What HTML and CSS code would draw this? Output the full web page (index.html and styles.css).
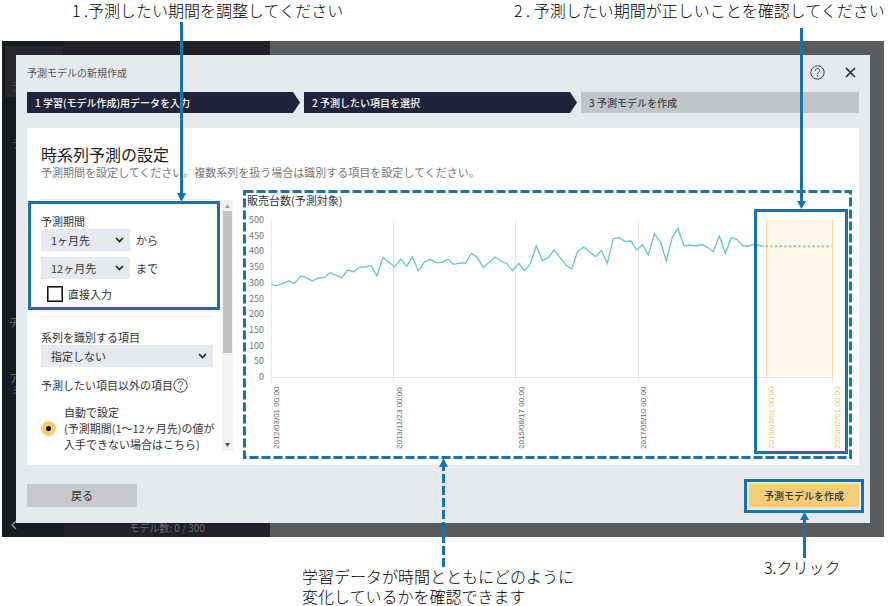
FILE: index.html
```html
<!DOCTYPE html>
<html lang="ja">
<head>
<meta charset="utf-8">
<meta name="viewport" content="width=device-width, initial-scale=1">
<title>予測モデルの新規作成</title>
<link rel="stylesheet" href="styles.css">
</head>
<body>
<div class="captions-top">
  <p>1 .予測したい期間を調整してください</p>
  <p>2 . 予測したい期間が正しいことを確認してください</p>
</div>

<div class="screen">
  <div class="backdrop">
    <div class="nav">
      <div class="nav-tile">デ</div>
      <span class="nav-item">デ</span>
      <span class="nav-item lower">チ</span>
      <span class="nav-item wrapped">ア<br>&nbsp;ミ</span>
      <span class="nav-collapse">
        <svg width="6" height="10" viewBox="0 0 6 10"><path d="M5 1 1 5l4 4"/></svg>
      </span>
    </div>
    <div class="model-list">モデル数: 0 / 300</div>
    <div class="workspace"></div>
  </div>

  <main class="dialog">
    <header class="dialog-head">
      <h1>予測モデルの新規作成</h1>
      <button class="icon-button" type="button" aria-label="ヘルプ">
        <svg class="help" width="15" height="15" viewBox="0 0 15 15"><circle cx="7.500" cy="7.500" r="6.700"/><path d="M5.300 5.800C5.300 4.300 6.300 3.600 7.500 3.600s2.200.7 2.200 1.900c0 1.600-2.200 1.700-2.200 3.300M7.500 10.200v1.400"/></svg>
      </button>
      <button class="icon-button" type="button" aria-label="閉じる">
        <svg class="close" width="11" height="11" viewBox="0 0 11 11"><path d="M1 1l9 9M10 1l-9 9"/></svg>
      </button>
    </header>

    <ol class="steps">
      <li class="step done">1 学習(モデル作成)用データを入力</li>
      <li class="step done">2 予測したい項目を選択</li>
      <li class="step">3 予測モデルを作成</li>
    </ol>

    <section class="panel">
      <h2>時系列予測の設定</h2>
      <p class="lead">予測期間を設定してください。複数系列を扱う場合は識別する項目を設定してください。</p>

      <div class="content">
        <form class="settings" id="settings">
          <div class="group period">
            <div class="label">予測期間</div>
            <div class="range">
              <span class="select short"><select id="from"><option>1ヶ月先</option></select>
                <svg width="9" height="6" viewBox="0 0 9 6"><path d="M1 1l3.500 3.500L8 1"/></svg></span>
              <label for="from">から</label>
            </div>
            <div class="range">
              <span class="select short"><select id="to"><option>12ヶ月先</option></select>
                <svg width="9" height="6" viewBox="0 0 9 6"><path d="M1 1l3.500 3.500L8 1"/></svg></span>
              <label for="to">まで</label>
            </div>
            <label class="check"><input type="checkbox">直接入力</label>
            <div class="mark period-mark"></div>
            <svg class="arrow period-arrow" width="9" height="180" viewBox="0 0 9 180"><path class="line" d="M4.500 0v174"/><path class="head" d="M0 171h9l-4.500 9z"/></svg>
          </div>
          <div class="group">
            <label class="label" for="series">系列を識別する項目</label>
            <span class="select"><select id="series"><option>指定しない</option></select>
              <svg width="9" height="6" viewBox="0 0 9 6"><path d="M1 1l3.500 3.500L8 1"/></svg></span>
            <div class="label others">予測したい項目以外の項目<svg class="help" width="15" height="15" viewBox="0 0 15 15"><circle cx="7.500" cy="7.500" r="6.700"/><path d="M5.300 5.800C5.300 4.300 6.300 3.600 7.500 3.600s2.200.7 2.200 1.900c0 1.600-2.200 1.700-2.200 3.300M7.500 10.200v1.400"/></svg></div>
            <label class="radio"><input type="radio" name="other" checked><span>自動で設定<br>(予測期間(1～12ヶ月先)の値が<br>入手できない場合はこちら)</span></label>
          </div>
        </form>

        <div class="scrollbar">
          <svg width="5" height="4" viewBox="0 0 5 4"><path class="up" d="M0 4h5L2.500 0z"/></svg>
          <div class="thumb"></div>
          <svg width="5" height="4" viewBox="0 0 5 4"><path class="down" d="M0 0h5L2.500 4z"/></svg>
        </div>

        <svg class="chart" viewBox="0 0 608 268" role="img" aria-label="販売台数(予測対象)">
          <text class="chart-title" x="3" y="15">販売台数(予測対象)</text>
          <g class="y-labels">
            <text x="20" y="33">500</text><text x="20" y="49">450</text><text x="20" y="64">400</text>
            <text x="20" y="80">350</text><text x="20" y="96">300</text><text x="20" y="112">250</text>
            <text x="20" y="127">200</text><text x="20" y="143">150</text><text x="20" y="159">100</text>
            <text x="20" y="174">50</text><text x="20" y="190">0</text>
          </g>
          <path class="grid" d="M27.500 30v163M149.500 30v161M271.500 30v161M394.500 30v161M588.500 187v6M27 187.500h561"/>
          <rect class="forecast" x="522" y="30" width="66" height="157"/>
          <path class="forecast-edge" d="M522.500 30v157.500M588.500 30v157.500"/>
          <g transform="translate(-4 0) scale(.33333)">
            <polyline class="series" points="94,283 110,287 128,281 146,272 164,280 182,258 199,263 217,273 235,264 253,263 270,248 288,256 305,263 323,240 341,245 358,232 376,231 393,227 411,258 429,202 447,217 464,231 482,207 500,229 517,201 535,242 553,216 570,208 588,218 606,217 624,207 641,223 659,219 677,219 694,190 712,202 730,233 747,217 765,201 783,213 800,221 818,242 836,220 853,242 871,221 889,168 907,212 925,203 942,180 960,202 978,226 995,237 1013,184 1031,171 1049,186 1067,200 1084,181 1102,220 1120,146 1138,143 1155,155 1173,153 1190,180 1208,164 1225,195 1243,132 1261,153 1279,213 1297,141 1314,115 1332,168 1350,165 1368,168 1385,163 1403,172 1420,185 1438,138 1456,190 1474,143 1491,149 1509,168 1527,168 1545,162 1563,168 1571,168"/>
            <path class="series predicted" d="M1577 169h198"/>
          </g>
          <g class="x-labels">
            <text transform="translate(35 259) rotate(-90)">2012/03/01 00:00</text>
            <text transform="translate(158 259) rotate(-90)">2013/11/23 00:00</text>
            <text transform="translate(280 259) rotate(-90)">2015/08/17 00:00</text>
            <text transform="translate(402 259) rotate(-90)">2017/05/10 00:00</text>
            <text class="future" transform="translate(530 259) rotate(-90)">2019/03/01 00:00</text>
            <text class="future" transform="translate(596 259) rotate(-90)">2020/02/01 00:00</text>
          </g>
          <g class="arrow">
            <rect class="line dashed" x=".5" y="1.500" width="606" height="266"/>
            <rect class="line" x="511.500" y="20.500" width="91" height="242"/>
            <path class="line" d="M557.500-162V13"/>
            <path class="head" d="M553 11h9l-4.500 8z"/>
            <path class="line dashed" d="M199.500 377V276"/>
            <path class="head" d="M195 277h9l-4.500-9z"/>
          </g>
        </svg>
      </div>
    </section>

    <footer class="actions">
      <button class="button" type="button">戻る</button>
      <div class="submit">
        <button class="button primary" type="submit" form="settings">予測モデルを作成</button>
        <div class="mark submit-mark"></div>
        <svg class="arrow submit-arrow" width="9" height="46" viewBox="0 0 9 46"><path class="line" d="M4.500 46V6"/><path class="head" d="M0 8h9L4.500 0z"/></svg>
      </div>
    </footer>
  </main>
</div>

<div class="captions-bottom">
  <p>学習データが時間とともにどのように<br>変化しているかを確認できます</p>
  <p class="click">3.クリック</p>
</div>
</body>
</html>
```

FILE: styles.css
```css
* { box-sizing: border-box; }

body {
  margin: 0;
  background: #fff;
  color: #333;
  font: 11px/15px "Noto Sans CJK JP", sans-serif;
}

h1, h2, p, ol { margin: 0; padding: 0; font-weight: 400; }
button, select, input { margin: 0; font: inherit; color: inherit; }

.captions-top,
.captions-bottom {
  display: grid;
  color: #000;
  font-size: 16px;
  line-height: 20px;
  white-space: nowrap;
}
.captions-top p,
.captions-bottom p { font-weight: 300; }
.captions-top {
  grid-template-columns: 442fr 374fr;
  height: 41px;
  padding-left: 72px;
}
.captions-bottom {
  grid-template-columns: 462fr 124fr;
  padding: 29px 0 0 302px;
}
.click { margin-top: -9px; }

.screen {
  display: grid;
  margin: 0 4px 0 2px;
}
.screen > * { grid-area: 1 / 1; }

.backdrop {
  display: grid;
  grid-template-columns: 62px 206px 1fr;
  background: #5a5b5c;
  color: #6c6c70;
}
.nav {
  display: flex;
  flex-direction: column;
  gap: 39px;
  padding: 5px 1px 7px 3px;
  background: #181b24;
}
.nav-tile {
  display: flex;
  align-items: flex-end;
  height: 51px;
  padding: 0 0 3px 7px;
  background: #282730;
  color: #505058;
}
.nav-item { padding-left: 7px; color: #505058; }
.nav-item.lower { margin-top: 125px; padding-left: 4px; color: #6c6c70; }
.nav-item.wrapped { margin-top: 3px; padding-left: 4px; line-height: 12px; color: #6c6c70; }
.nav-collapse { display: flex; margin-top: auto; padding-left: 6px; }
.nav-collapse svg { fill: none; stroke: #8c8c90; stroke-width: 1.5; }
.model-list {
  display: flex;
  align-items: flex-end;
  justify-content: center;
  padding-bottom: 2px;
  background: #22212a;
  font-size: 10px;
}

.dialog {
  position: relative;
  margin: 14px;
  padding: 0 11px 16px;
  background: #e6e9ee;
}
.dialog-head {
  display: flex;
  align-items: center;
  gap: 20px;
  height: 37px;
  padding: 0 3px 3px 0;
}
.dialog-head h1 { flex: 1; font-size: 10px; color: #555; }
.icon-button { display: flex; padding: 0; border: 0; background: none; }
.help { fill: none; stroke: #444; stroke-width: 1; }
.close { fill: none; stroke: #222; stroke-width: 1.5; }

.steps {
  display: grid;
  grid-template-columns: 273fr 273fr 278fr;
  gap: 4px;
  list-style: none;
}
.step {
  height: 21px;
  padding-left: 8px;
  background: #c1c5ca;
  color: #444;
  font-size: 10px;
  line-height: 22px;
  font-weight: 500;
}
.step.done {
  background: #20233a;
  color: #fff;
  clip-path: polygon(0 0, calc(100% - 7px) 0, 100% 50%, calc(100% - 7px) 100%, 0 100%);
}

.panel {
  margin-top: 15px;
  padding: 17px 7px 7px 14px;
  background: #fff;
}
.panel h2 { font-size: 16px; line-height: 18px; color: #222; }
.lead { line-height: 18px; color: #777; }
.content {
  display: grid;
  grid-template-columns: 181px 22px 1fr;
  margin-top: 9px;
}

.settings { margin: 9px 9px 0 0; }
.group { position: relative; padding-top: 13px; }
.period {
  padding: 14px 0 13px;
  border: solid #e6e6e6;
  border-width: 1px 0;
}
.label { display: flex; align-items: center; height: 15px; white-space: nowrap; }
.others { margin: 11px 0; }
.range { display: flex; align-items: center; gap: 6px; margin-bottom: 6px; }
.select { position: relative; display: block; height: 22px; }
.select.short { width: 89px; }
.select select {
  appearance: none;
  width: 100%;
  height: 22px;
  padding: 0 10px;
  border: 0;
  border-radius: 0;
  background: #e6e9ee;
}
.select svg {
  position: absolute;
  top: 8px;
  right: 6px;
  fill: none;
  stroke: #222;
  stroke-width: 1.7;
  pointer-events: none;
}
.check { display: flex; align-items: center; gap: 5px; height: 18px; padding-left: 6px; }
.check input {
  appearance: none;
  width: 16px;
  height: 16px;
  border: 1px solid #111;
  outline: 1px solid #777;
  outline-offset: -2px;
  background: #fff;
}
.radio { display: flex; align-items: center; gap: 8px; line-height: 16px; white-space: nowrap; }
.radio input {
  appearance: none;
  flex: none;
  width: 15px;
  height: 15px;
  border: 5px solid #f4cd78;
  border-radius: 50%;
  background: #000;
}

.scrollbar {
  display: flex;
  flex-direction: column;
  align-items: center;
  width: 11px;
  height: 251px;
  margin-top: 10px;
  padding: 4px 1px;
  background: #f1f1f1;
}
.scrollbar .up { fill: #a3a3a3; }
.scrollbar .down { fill: #505050; }
.thumb { width: 100%; height: 142px; margin: 3px 0 auto; background: #c1c1c1; }

.chart { display: block; width: 100%; overflow: visible; }
.chart-title { font-size: 11px; fill: #333; }
.y-labels { font-size: 9px; text-anchor: end; fill: #777; }
.x-labels { font-family: "Liberation Sans", sans-serif; font-size: 8px; fill: #666; }
.x-labels .future { fill: #f3c76b; }
.grid { fill: none; stroke: #e6e6e6; }
.forecast { fill: #fef7ea; }
.forecast-edge { stroke: #f7dc9c; }
.series { fill: none; stroke: #66c9c8; stroke-width: 4; }
.predicted { stroke-width: 5; stroke-dasharray: 7 7; }

.mark { position: absolute; border: 3px solid #1a72a6; pointer-events: none; }
.arrow { pointer-events: none; }
.arrow .line { fill: none; stroke: #1a72a6; stroke-width: 3; }
.arrow .dashed { stroke-dasharray: 9 3; }
.arrow .head { fill: #1a72a6; }
svg.arrow { position: absolute; }
.period-mark { inset: 1px -7px 6px -13px; }
.period-arrow { top: -178px; left: 136px; }

.actions { display: flex; justify-content: space-between; margin-top: 19px; }
.button {
  display: block;
  width: 110px;
  height: 23px;
  padding: 0;
  border: 0;
  border-radius: 1px;
  background: #c7c8cd;
}
.button.primary { background: #f4cd78; font-size: 10px; font-weight: 500; }
.submit { position: relative; }
.submit-mark { inset: -5px -5px -6px; }
.submit-arrow { top: 28px; left: 51px; }
```
